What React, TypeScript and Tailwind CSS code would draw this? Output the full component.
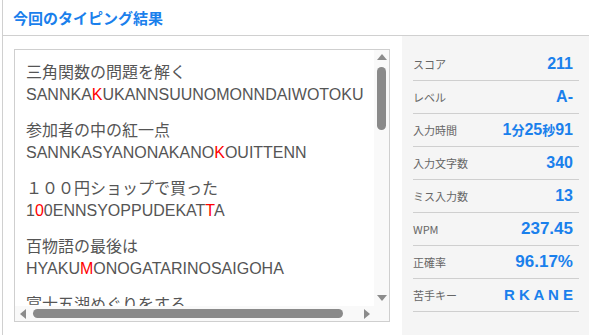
import React from "react";

type Seg = { t: string; miss?: boolean };

const jp = '"Noto Sans CJK JP", "Liberation Sans", sans-serif';

const words: { kana: string; roma: Seg[] }[] = [
  {
    kana: "三角関数の問題を解く",
    roma: [{ t: "SANNKA" }, { t: "K", miss: true }, { t: "UKANNSUUNOMONNDAIWOTOKU" }],
  },
  {
    kana: "参加者の中の紅一点",
    roma: [{ t: "SANNKASYANONAKANO" }, { t: "K", miss: true }, { t: "OUITTENN" }],
  },
  {
    kana: "１００円ショップで買った",
    roma: [
      { t: "1" },
      { t: "0", miss: true },
      { t: "0ENNSYOPPUDEKAT" },
      { t: "T", miss: true },
      { t: "A" },
    ],
  },
  {
    kana: "百物語の最後は",
    roma: [{ t: "HYAKU" }, { t: "M", miss: true }, { t: "ONOGATARINOSAIGOHA" }],
  },
  // scrolled out of view, only the top of the kana shows
  { kana: "富士五湖めぐりをする", roma: [] },
];

const stats: { label: string; value: React.ReactNode }[] = [
  { label: "スコア", value: "211" },
  { label: "レベル", value: "A-" },
  {
    label: "入力時間",
    value: (
      <>
        1<span className="text-[13px]">分</span>25<span className="text-[13px]">秒</span>91
      </>
    ),
  },
  { label: "入力文字数", value: "340" },
  { label: "ミス入力数", value: "13" },
  { label: "WPM", value: <span className="text-[17px]">237.45</span> },
  { label: "正確率", value: <span className="text-[17px]">96.17%</span> },
  { label: "苦手キー", value: <span className="text-[15px]">R K A N E</span> },
];

function Arrow({ dir }: { dir: "up" | "down" | "left" | "right" }) {
  const pts = {
    up: "0,6 5,0 10,6",
    down: "0,0 10,0 5,6",
    left: "6,0 6,10 0,5",
    right: "0,0 0,10 6,5",
  }[dir];
  const vert = dir === "up" || dir === "down";
  return (
    <svg width={vert ? 10 : 6} height={vert ? 6 : 10} viewBox={vert ? "0 0 10 6" : "0 0 6 10"}>
      <polygon points={pts} fill="#8c8c8c" />
    </svg>
  );
}

export default function App() {
  return (
    <div className="w-[589px] h-[335px] overflow-hidden bg-white" style={{ fontFamily: jp }}>
      <div className="ml-[2px] h-full border-l border-[#d0d0d0] flex flex-col">
        <div className="h-[36px] border-b border-[#d0d0d0] flex items-center pl-[10px]">
          <h1 className="text-[15px] font-bold text-[#1a80ec] leading-none">今回のタイピング結果</h1>
        </div>

        <div className="flex flex-1 min-h-0">
          <div className="w-[399px] pl-[11px] pt-[13px]">
            <div className="w-[376px] h-[273px] border border-[#cfcfcf] flex flex-col">
              <div className="flex flex-1 min-h-0">
                <div className="flex-1 overflow-hidden pl-[11px] pt-[10px] text-[#555] text-[16px] leading-[23px]">
                  {words.map((w) => (
                    <div key={w.kana} className="mb-[12px] whitespace-nowrap">
                      <div>{w.kana}</div>
                      {w.roma.length > 0 && (
                        <div style={{ fontFamily: '"Liberation Sans", sans-serif' }}>
                          {w.roma.map((s, i) => (
                            <span key={i} className={s.miss ? "text-[#ff0000]" : ""}>
                              {s.t}
                            </span>
                          ))}
                        </div>
                      )}
                    </div>
                  ))}
                </div>
                <div className="w-[15px] bg-[#f9f9f9] flex flex-col items-center pt-[4px] pb-[5px]">
                  <Arrow dir="up" />
                  <div className="mt-[7px] w-[9px] h-[63px] rounded-full bg-[#8a8a8a]" />
                  <div className="flex-1" />
                  <Arrow dir="down" />
                </div>
              </div>
              <div className="h-[15px] flex">
                <div className="flex-1 bg-[#f9f9f9] flex items-center pl-[5px] pr-[4px]">
                  <Arrow dir="left" />
                  <div className="ml-[7px] w-[310px] h-[9px] rounded-full bg-[#8a8a8a]" />
                  <div className="flex-1" />
                  <Arrow dir="right" />
                </div>
                <div className="w-[15px] bg-[#f9f9f9]" />
              </div>
            </div>
          </div>

          <div className="flex-1 bg-[#f5f5f5] pl-[11px] pr-[10px] pt-[12px]">
            {stats.map((s) => (
              <div
                key={s.label}
                className="h-[33px] border-b border-[#cfcfcf] flex items-center justify-between pr-[6px]"
              >
                <span className="text-[11px] text-[#666]">{s.label}</span>
                <span
                  className="text-[16px] font-bold text-[#1a80ec]"
                  style={{ fontFamily: '"Liberation Sans", "Noto Sans CJK JP", sans-serif' }}
                >
                  {s.value}
                </span>
              </div>
            ))}
          </div>
        </div>
      </div>
    </div>
  );
}
